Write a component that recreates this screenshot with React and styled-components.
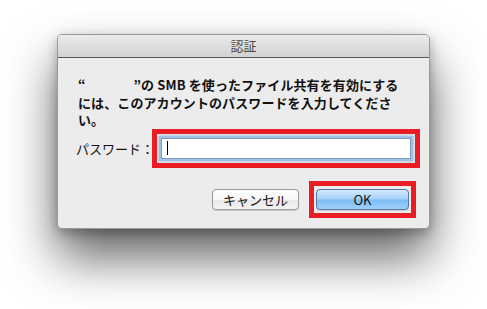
import React from "react";
import styled, { createGlobalStyle } from "styled-components";

const GlobalStyle = createGlobalStyle`
  html, body {
    margin: 0;
    padding: 0;
    background: #ffffff;
  }
  body {
    font-family: "Noto Sans CJK JP", "Liberation Sans", sans-serif;
  }
`;

const Page = styled.div`
  width: 487px;
  height: 309px;
  padding: 34px 0 0 57px;
  box-sizing: border-box;
  overflow: hidden;
`;

const Window = styled.div`
  width: 373px;
  height: 195px;
  box-sizing: border-box;
  display: flex;
  flex-direction: column;
  background: #ececec;
  border: 1px solid #9a9a9a;
  border-radius: 5px;
  box-shadow: 0 28px 50px rgba(0, 0, 0, 0.62), 0 4px 12px rgba(0, 0, 0, 0.28);
  overflow: hidden;
`;

const TitleBar = styled.div`
  height: 22px;
  flex-shrink: 0;
  border-bottom: 1px solid #5a5a5a;
  background: linear-gradient(#ebebeb, #d2d2d2);
  text-align: center;
  line-height: 22px;
  font-size: 13px;
  color: #4a4a4a;
`;

const Body = styled.div`
  flex: 1;
  display: flex;
  flex-direction: column;
  padding: 18px 9px 0 18px;
`;

const Message = styled.p`
  margin: 0 0 0 2px;
  font-size: 13px;
  font-weight: 700;
  line-height: 17.5px;
  color: #111;
  letter-spacing: 0.1px;
`;

const Blank = styled.span`
  display: inline-block;
  width: 48px;
`;

const PasswordRow = styled.div`
  display: flex;
  align-items: center;
  margin-top: 0;
`;

const Label = styled.span`
  width: 76px;
  font-size: 13px;
  color: #111;
  white-space: nowrap;
`;

const Highlight = styled.div`
  display: flex;
  align-items: center;
  border: 5px solid #ea1c24;
  padding: ${(p) => p.$pad};
  background: #ececec;
`;

const InputField = styled.div`
  width: 250px;
  height: 21px;
  display: flex;
  align-items: center;
  padding-left: 5px;
  box-sizing: border-box;
  background: #fff;
  border: 1px solid #7f9cbf;
  box-shadow: 0 0 0 2px #9ec2e6, 0 0 2px 3px rgba(120, 165, 215, 0.45);
`;

const Caret = styled.span`
  width: 1px;
  height: 14px;
  background: #000;
`;

const ButtonRow = styled.div`
  display: flex;
  justify-content: flex-end;
  align-items: center;
  gap: 10px;
  margin-top: 13px;
  padding-right: 4px;
`;

const Button = styled.button`
  height: 21px;
  width: ${(p) => p.$w}px;
  box-sizing: border-box;
  border-radius: 4px;
  font-family: "Noto Sans CJK JP", "Liberation Sans", sans-serif;
  font-size: 13px;
  line-height: 19px;
  padding: 0;
  color: #111;
  border: 1px solid ${(p) => (p.$primary ? "#56789f" : "#9a9a9a")};
  background: ${(p) =>
    p.$primary
      ? "linear-gradient(#d3e9fc 0%, #a6d2f8 45%, #7dbdf3 55%, #9fd0fa 100%)"
      : "linear-gradient(#ffffff 0%, #f6f6f6 50%, #e9e9e9 55%, #f3f3f3 100%)"};
  box-shadow: 0 1px 1px rgba(0, 0, 0, 0.15);
`;

export default function App() {
  return (
    <Page>
      <GlobalStyle />
      <Window>
        <TitleBar>認証</TitleBar>
        <Body>
          <Message>
            “<Blank />”の SMB を使ったファイル共有を有効にする
            <br />
            には、このアカウントのパスワードを入力してくださ
            <br />
            い。
          </Message>
          <PasswordRow>
            <Label>パスワード：</Label>
            <Highlight $pad="4px">
              <InputField>
                <Caret />
              </InputField>
            </Highlight>
          </PasswordRow>
          <ButtonRow>
            <Button $w={87}>キャンセル</Button>
            <Highlight $pad="3px 2px">
              <Button $primary $w={93}>
                OK
              </Button>
            </Highlight>
          </ButtonRow>
        </Body>
      </Window>
    </Page>
  );
}
